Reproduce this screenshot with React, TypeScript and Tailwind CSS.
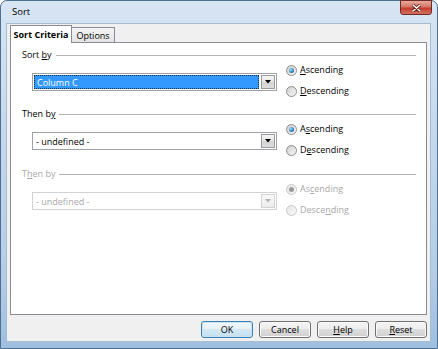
import React from "react";

const font = { fontFamily: '"Open Sans", "Noto Sans", sans-serif' };

function U({ children }: { children: React.ReactNode }) {
  return <span className="underline underline-offset-[1px] decoration-[1px]">{children}</span>;
}

function Radio({ checked, disabled }: { checked?: boolean; disabled?: boolean }) {
  return (
    <span
      className={
        "inline-flex w-[11px] h-[11px] shrink-0 rounded-full border items-center justify-center " +
        (disabled
          ? "border-[#c8c8c8] bg-[linear-gradient(135deg,#e6e6e6,#f8f8f8)]"
          : "border-[#8a8c8e] bg-[linear-gradient(135deg,#cfcfcf,#f7f7f7)]")
      }
    >
      {checked && (
        <span
          className={
            "w-[5px] h-[5px] rounded-full " +
            (disabled
              ? "bg-[#9a9a9a]"
              : "bg-[radial-gradient(circle_at_35%_35%,#9fe0ff,#1e6aa6_70%)]")
          }
        />
      )}
    </span>
  );
}

function Combo({ text, selected, disabled }: { text: string; selected?: boolean; disabled?: boolean }) {
  return (
    <div
      className={
        "w-[245px] h-[18px] border bg-white flex items-center p-[1px] " +
        (disabled ? "border-[#cfd2d6]" : "border-[#9da2a9]")
      }
    >
      <div
        className={
          "flex-1 h-full flex items-center pl-[2px] mr-[2px] " +
          (selected
            ? "bg-[#3399ff] text-white border border-dotted border-[#1b2c40]"
            : disabled
            ? "text-[#a8a8a8]"
            : "text-black")
        }
      >
        {text}
      </div>
      <div
        className={
          "w-[14px] h-[14px] border flex items-center justify-center " +
          (disabled
            ? "border-[#d3d3d3] bg-[linear-gradient(#f8f8f8,#ededed)]"
            : "border-[#9a9a9a] bg-[linear-gradient(#f6f6f6,#e3e3e3_50%,#d4d4d4_50%,#dcdcdc)]")
        }
      >
        <svg width="6" height="4" viewBox="0 0 6 4">
          <path d="M0 0 H6 L3 3.5 Z" fill={disabled ? "#b4b4b4" : "#000"} />
        </svg>
      </div>
    </div>
  );
}

function Section({
  label,
  combo,
  selected,
  disabled,
  asc,
  desc,
  className,
}: {
  label: React.ReactNode;
  combo: string;
  selected?: boolean;
  disabled?: boolean;
  asc: React.ReactNode;
  desc: React.ReactNode;
  className?: string;
}) {
  const tc = disabled ? "text-[#a8a8a8]" : "text-black";
  return (
    <div className={"flex flex-col " + (className ?? "")}>
      <div className="h-[12px] flex items-center pl-[11px] pr-[10px]">
        <span className={"leading-[12px] " + tc}>{label}</span>
        <div className="flex-1 h-px bg-[#b4b4b4] ml-[4px]" />
      </div>
      <div className="flex mt-[3px]">
        <div className="pl-[21px] pt-[9px]">
          <Combo text={combo} selected={selected} disabled={disabled} />
        </div>
        <div className="ml-[9px] flex flex-col gap-[9px]">
          <div className="h-[12px] flex items-center">
            <Radio checked disabled={disabled} />
            <span className={"ml-[3px] leading-[12px] " + tc}>{asc}</span>
          </div>
          <div className="h-[12px] flex items-center">
            <Radio disabled={disabled} />
            <span className={"ml-[3px] leading-[12px] " + tc}>{desc}</span>
          </div>
        </div>
      </div>
    </div>
  );
}

function Btn({ children, def }: { children: React.ReactNode; def?: boolean }) {
  return (
    <div
      className={
        "w-[52px] h-[17px] rounded-[3px] border flex items-center justify-center text-black " +
        (def
          ? "border-[#3c7fb1] bg-[linear-gradient(#f1f8fc,#e6f2f9_50%,#d3e7f4_50%,#c4dff0)] shadow-[inset_0_0_0_1px_#c6e6f8]"
          : "border-[#707070] bg-[linear-gradient(#f4f4f4,#ececec_50%,#dddddd_50%,#d0d0d0)] shadow-[inset_0_0_0_1px_#fbfbfb]")
      }
    >
      {children}
    </div>
  );
}

export default function App() {
  return (
    <div style={font} className="w-[438px] h-[349px] text-[9px] leading-none">
      <div className="w-full h-full flex flex-col rounded-t-[7px] border border-[#4f6f92] bg-[linear-gradient(180deg,#d7e5f3_0%,#c4d8ec_40%,#b3cce6_80%,#9fbfe0_100%)] pl-[5px] pr-[6px] pb-[6px]">
        <div className="h-[22px] flex justify-between items-start">
          <span className="pl-[6px] pt-[6px] text-black text-[9.5px]">Sort</span>
          <div className="-mt-px mr-[-1px] w-[32px] h-[15px] rounded-b-[3px] border border-[#6d2a22] bg-[linear-gradient(#e9aa9e,#d77565_45%,#c23c2c_55%,#d6705f)] flex items-center justify-center">
            <svg width="9" height="8" viewBox="0 0 9 8">
              <path d="M1 1 L8 7 M8 1 L1 7" stroke="#5a1a12" strokeWidth="3" strokeLinecap="round" />
              <path d="M1 1 L8 7 M8 1 L1 7" stroke="#ffffff" strokeWidth="1.6" strokeLinecap="round" />
            </svg>
          </div>
        </div>
        <div className="w-[425px] h-[319px] bg-[#f0f0f0] border border-[#a7bbd1] pl-[3px] pt-[1px] flex flex-col">
          <div className="h-[17px] flex items-end">
            <div className="relative z-10 h-[18px] -mb-px w-[62px] bg-white border-l border-t border-r border-[#898c95] flex items-center justify-center font-bold text-black">
              Sort Criteria
            </div>
            <div className="h-[15px] w-[43px] border-t border-r border-[#898c95] bg-[linear-gradient(#f4f4f4,#e4e4e4)] flex items-center justify-center text-black">
              Options
            </div>
          </div>
          <div className="w-[417px] h-[273px] bg-white border border-[#898c95] pt-[6px] flex flex-col">
            <Section
              label={<>Sort <U>b</U>y</>}
              combo="Column C"
              selected
              asc={<><U>A</U>scending</>}
              desc={<><U>D</U>escending</>}
            />
            <Section
              className="mt-[11px]"
              label={<>Then b<U>y</U></>}
              combo="- undefined -"
              asc={<>A<U>s</U>cending</>}
              desc={<>D<U>e</U>scending</>}
            />
            <Section
              className="mt-[12px]"
              label={<>T<U>h</U>en by</>}
              combo="- undefined -"
              disabled
              asc={<>As<U>c</U>ending</>}
              desc={<>Desce<U>n</U>ding</>}
            />
          </div>
          <div className="w-[417px] mt-[6px] flex justify-end gap-[6px]">
            <Btn def>OK</Btn>
            <Btn>Cancel</Btn>
            <Btn><U>H</U>elp</Btn>
            <Btn><U>R</U>eset</Btn>
          </div>
        </div>
      </div>
    </div>
  );
}
